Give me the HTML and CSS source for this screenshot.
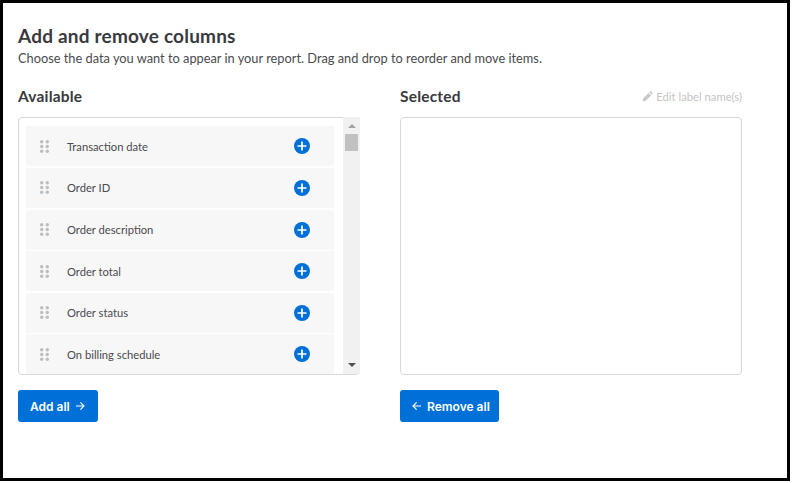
FILE: index.html
```html
<!DOCTYPE html>
<html lang="en">
<head>
<meta charset="utf-8">
<title>Add and remove columns</title>
<link rel="stylesheet" href="styles.css">
</head>
<body>
<main class="frame">
  <h1 class="title">Add and remove columns</h1>
  <p class="lead">Choose the data you want to appear in your report. Drag and drop to reorder and move items.</p>
  <div class="columns">
    <section class="column">
      <div class="column-head"><h2 class="column-title">Available</h2></div>
      <div class="box">
        <ul class="list">
          <li class="item"><svg class="grip" viewBox="0 0 9 13"><g fill="#b9bec3"><circle cx="1.7" cy="1.7" r="1.7"/><circle cx="7.3" cy="1.7" r="1.7"/><circle cx="1.7" cy="6.5" r="1.7"/><circle cx="7.3" cy="6.5" r="1.7"/><circle cx="1.7" cy="11.3" r="1.7"/><circle cx="7.3" cy="11.3" r="1.7"/></g></svg><span class="item-label">Transaction date</span><svg class="plus" viewBox="0 0 16 16"><circle cx="8" cy="8" r="8" fill="#0070d9"/><path d="M8 4.2v7.6M4.2 8h7.6" stroke="#fff" stroke-width="1.7" stroke-linecap="round"/></svg></li>
          <li class="item"><svg class="grip" viewBox="0 0 9 13"><g fill="#b9bec3"><circle cx="1.7" cy="1.7" r="1.7"/><circle cx="7.3" cy="1.7" r="1.7"/><circle cx="1.7" cy="6.5" r="1.7"/><circle cx="7.3" cy="6.5" r="1.7"/><circle cx="1.7" cy="11.3" r="1.7"/><circle cx="7.3" cy="11.3" r="1.7"/></g></svg><span class="item-label">Order ID</span><svg class="plus" viewBox="0 0 16 16"><circle cx="8" cy="8" r="8" fill="#0070d9"/><path d="M8 4.2v7.6M4.2 8h7.6" stroke="#fff" stroke-width="1.7" stroke-linecap="round"/></svg></li>
          <li class="item"><svg class="grip" viewBox="0 0 9 13"><g fill="#b9bec3"><circle cx="1.7" cy="1.7" r="1.7"/><circle cx="7.3" cy="1.7" r="1.7"/><circle cx="1.7" cy="6.5" r="1.7"/><circle cx="7.3" cy="6.5" r="1.7"/><circle cx="1.7" cy="11.3" r="1.7"/><circle cx="7.3" cy="11.3" r="1.7"/></g></svg><span class="item-label">Order description</span><svg class="plus" viewBox="0 0 16 16"><circle cx="8" cy="8" r="8" fill="#0070d9"/><path d="M8 4.2v7.6M4.2 8h7.6" stroke="#fff" stroke-width="1.7" stroke-linecap="round"/></svg></li>
          <li class="item"><svg class="grip" viewBox="0 0 9 13"><g fill="#b9bec3"><circle cx="1.7" cy="1.7" r="1.7"/><circle cx="7.3" cy="1.7" r="1.7"/><circle cx="1.7" cy="6.5" r="1.7"/><circle cx="7.3" cy="6.5" r="1.7"/><circle cx="1.7" cy="11.3" r="1.7"/><circle cx="7.3" cy="11.3" r="1.7"/></g></svg><span class="item-label">Order total</span><svg class="plus" viewBox="0 0 16 16"><circle cx="8" cy="8" r="8" fill="#0070d9"/><path d="M8 4.2v7.6M4.2 8h7.6" stroke="#fff" stroke-width="1.7" stroke-linecap="round"/></svg></li>
          <li class="item"><svg class="grip" viewBox="0 0 9 13"><g fill="#b9bec3"><circle cx="1.7" cy="1.7" r="1.7"/><circle cx="7.3" cy="1.7" r="1.7"/><circle cx="1.7" cy="6.5" r="1.7"/><circle cx="7.3" cy="6.5" r="1.7"/><circle cx="1.7" cy="11.3" r="1.7"/><circle cx="7.3" cy="11.3" r="1.7"/></g></svg><span class="item-label">Order status</span><svg class="plus" viewBox="0 0 16 16"><circle cx="8" cy="8" r="8" fill="#0070d9"/><path d="M8 4.2v7.6M4.2 8h7.6" stroke="#fff" stroke-width="1.7" stroke-linecap="round"/></svg></li>
          <li class="item"><svg class="grip" viewBox="0 0 9 13"><g fill="#b9bec3"><circle cx="1.7" cy="1.7" r="1.7"/><circle cx="7.3" cy="1.7" r="1.7"/><circle cx="1.7" cy="6.5" r="1.7"/><circle cx="7.3" cy="6.5" r="1.7"/><circle cx="1.7" cy="11.3" r="1.7"/><circle cx="7.3" cy="11.3" r="1.7"/></g></svg><span class="item-label">On billing schedule</span><svg class="plus" viewBox="0 0 16 16"><circle cx="8" cy="8" r="8" fill="#0070d9"/><path d="M8 4.2v7.6M4.2 8h7.6" stroke="#fff" stroke-width="1.7" stroke-linecap="round"/></svg></li>
        </ul>
        <div class="scrollbar">
          <span class="arrow-up"></span>
          <span class="thumb"></span>
          <span class="arrow-down"></span>
        </div>
      </div>
      <button class="btn btn-add" type="button">Add all <svg class="arrow" viewBox="0 0 10 10"><path d="M1 5h8M5.4 1.4 9 5 5.4 8.6" fill="none" stroke="#fff" stroke-width="1.2"/></svg></button>
    </section>
    <section class="column">
      <div class="column-head">
        <h2 class="column-title">Selected</h2>
        <span class="edit"><svg class="pencil" viewBox="0 0 11 11"><path d="M0.5 10.5 1.3 7.3 6.6 2 9 4.4 3.7 9.7ZM7.3 1.3 8 .6a1 1 0 0 1 1.3 0l1.1 1.1a1 1 0 0 1 0 1.3l-.7.7Z" fill="#c9c9c9"/></svg>Edit label name(s)</span>
      </div>
      <div class="box"></div>
      <button class="btn btn-remove" type="button"><svg class="arrow" viewBox="0 0 10 10"><path d="M9 5H1M4.6 1.4 1 5l3.6 3.6" fill="none" stroke="#fff" stroke-width="1.2"/></svg> Remove all</button>
    </section>
  </div>
</main>
</body>
</html>
```
FILE: styles.css
```css
* { box-sizing: border-box; }
html, body { margin: 0; padding: 0; background: #fff; }
body { font-family: "Lato", "Open Sans", sans-serif; color: #393a3d; }
.frame {
  width: 790px;
  height: 481px;
  border: 3px solid #000;
  padding: 21px 15px 0;
}
.title { margin: 0; font-size: 19px; line-height: 24px; font-weight: 700; letter-spacing: 0.2px; }
.lead { margin: 1px 0 0; font-size: 12.8px; line-height: 18px; color: #4a4b4e; }
.columns { display: flex; gap: 40px; margin-top: 17px; }
.column { width: 342px; display: flex; flex-direction: column; align-items: flex-start; }
.column-head { width: 100%; height: 24px; display: flex; justify-content: space-between; align-items: center; margin-bottom: 9px; }
.column-title { margin: 0; font-size: 15.5px; font-weight: 700; letter-spacing: 0.2px; }
.edit { display: flex; align-items: center; gap: 3px; font-size: 11.25px; color: #c4c4c4; }
.pencil { width: 11px; height: 11px; }
.box {
  width: 342px;
  height: 258px;
  border: 1px solid #d9d9d9;
  border-radius: 4px;
  display: flex;
  margin-bottom: 15px;
}
.list { list-style: none; margin: 0; padding: 8.4px 8px 0 7px; flex: 1; overflow: hidden; display: flex; flex-direction: column; gap: 1.6px; }
.item { flex: none; height: 40px; width: 308px; background: #f7f7f7; display: flex; align-items: center; padding: 0 24.5px 0 14px; }
.grip { width: 9px; height: 13px; margin-right: 18px; }
.item-label { flex: 1; font-size: 11.2px; color: #4a4b4e; }
.plus { width: 16px; height: 16px; }
.scrollbar { flex: none; width: 17px; margin: -1px -1px 0 0; background: #f1f1f1; display: flex; flex-direction: column; align-items: center; padding-top: 7px; }
.arrow-up { width: 0; height: 0; border: 4px solid transparent; border-top: 0; border-bottom: 4px solid #a3a3a3; }
.thumb { width: 13px; height: 17px; background: #c1c1c1; margin-top: 6px; }
.arrow-down { width: 0; height: 0; border: 4px solid transparent; border-bottom: 0; border-top: 4px solid #505050; margin-top: auto; margin-bottom: 7px; }
.btn {
  height: 32px;
  border: 0;
  border-radius: 3px;
  background: #0070d9;
  color: #fff;
  font-family: "Inter", "Lato", sans-serif;
  font-size: 12px;
  font-weight: 600;
  display: inline-flex;
  align-items: center;
  gap: 5px;
}
.btn-add { padding: 0 13px 0 12px; }
.btn-remove { padding: 0 9px 0 12px; }
.arrow { width: 10px; height: 10px; }
```
